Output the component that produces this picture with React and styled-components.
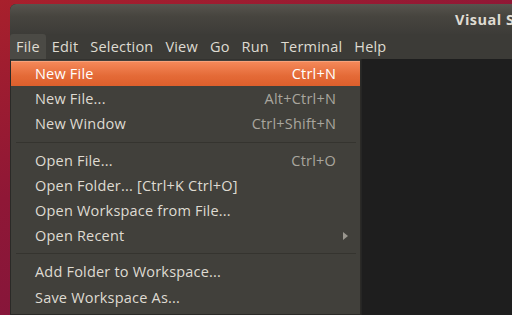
import React from 'react';
import styled, { createGlobalStyle } from 'styled-components';

const GlobalStyle = createGlobalStyle`
    html, body {
        margin: 0;
        padding: 0;
        width: 512px;
        height: 315px;
        overflow: hidden;
        background: linear-gradient(160deg, #a8202c 0%, #8f1736 40%, #7a1440 100%);
        font-family: "Open Sans", "Noto Sans", "DejaVu Sans", sans-serif;
    }
`;

const Window = styled.div`
    margin: 4px 0 0 10px;
    height: 311px;
    display: flex;
    flex-direction: column;
    border-top-left-radius: 6px;
    overflow: hidden;
    background: #1e1e1e;
`;

const TitleBar = styled.div`
    height: 30px;
    flex: none;
    background: linear-gradient(#57544e, #47453f 40%, #3d3c38);
    display: flex;
    align-items: center;
    padding-left: 445px;
    color: #dfdbd2;
    font-weight: bold;
    font-size: 14.5px;
    letter-spacing: 0.5px;
    white-space: nowrap;
    overflow: hidden;
`;

const MenuBar = styled.div`
    height: 25px;
    flex: none;
    background: #3c3b37;
    display: flex;
    align-items: stretch;
`;

const MenuTitle = styled.div`
    padding: 0 6px;
    display: flex;
    align-items: center;
    font-size: 14.5px;
    letter-spacing: 0.2px;
    color: #dfdbd2;
    background: ${p => (p.$open ? '#4b4a45' : 'transparent')};
    border-radius: ${p => (p.$open ? '3px 3px 0 0' : '0')};
`;

const Body = styled.div`
    flex: 1;
    display: flex;
    min-height: 0;
`;

const Dropdown = styled.div`
    width: 349px;
    flex: none;
    background: #41403b;
    border: 1px solid #2b2a27;
    border-top-color: #33322f;
    padding-top: 1px;
    box-sizing: content-box;
`;

const Editor = styled.div`
    flex: 1;
    background: #1e1e1e;
    border-left: 1px solid #262625;
`;

const Item = styled.div`
    height: 25.2px;
    display: flex;
    align-items: center;
    justify-content: space-between;
    padding: 0 24px 0 24px;
    font-size: 14.5px;
    letter-spacing: 0.2px;
    color: ${p => (p.$active ? '#ffffff' : '#dfdbd2')};
    background: ${p => (p.$active ? 'linear-gradient(#f58a5b, #e46a37 60%, #dd5f2c)' : 'transparent')};
    box-shadow: ${p => (p.$active ? 'inset 0 1px 0 #f7a27b' : 'none')};
    position: relative;
`;

const Shortcut = styled.span`
    color: ${p => (p.$active ? '#ffffff' : '#a9a69e')};
`;

const Arrow = styled.span`
    position: absolute;
    right: 12px;
    top: 50%;
    margin-top: -4px;
    width: 0;
    height: 0;
    border-top: 4px solid transparent;
    border-bottom: 4px solid transparent;
    border-left: 5px solid #9a978f;
`;

const Separator = styled.div`
    height: 1px;
    background: #35342f;
    margin: 5px 4px 5px 5px;
`;

const menus = ['File', 'Edit', 'Selection', 'View', 'Go', 'Run', 'Terminal', 'Help'];

const groups = [
    [
        { label: 'New File', key: 'Ctrl+N', active: true },
        { label: 'New File...', key: 'Alt+Ctrl+N' },
        { label: 'New Window', key: 'Ctrl+Shift+N' },
    ],
    [
        { label: 'Open File...', key: 'Ctrl+O' },
        { label: 'Open Folder... [Ctrl+K Ctrl+O]' },
        { label: 'Open Workspace from File...' },
        { label: 'Open Recent', sub: true },
    ],
    [
        { label: 'Add Folder to Workspace...' },
        { label: 'Save Workspace As...' },
    ],
];

const App = () => {
    return (
        <>
            <GlobalStyle />
            <Window>
                <TitleBar>Visual Studio Code</TitleBar>
                <MenuBar>
                    {menus.map(m => (
                        <MenuTitle key={m} $open={m === 'File'}>{m}</MenuTitle>
                    ))}
                </MenuBar>
                <Body>
                    <Dropdown>
                        {groups.map((g, gi) => (
                            <React.Fragment key={gi}>
                                {gi > 0 && <Separator />}
                                {g.map(it => (
                                    <Item key={it.label} $active={it.active}>
                                        <span>{it.label}</span>
                                        {it.key && <Shortcut $active={it.active}>{it.key}</Shortcut>}
                                        {it.sub && <Arrow />}
                                    </Item>
                                ))}
                            </React.Fragment>
                        ))}
                    </Dropdown>
                    <Editor />
                </Body>
            </Window>
        </>
    );
};

export default App;
